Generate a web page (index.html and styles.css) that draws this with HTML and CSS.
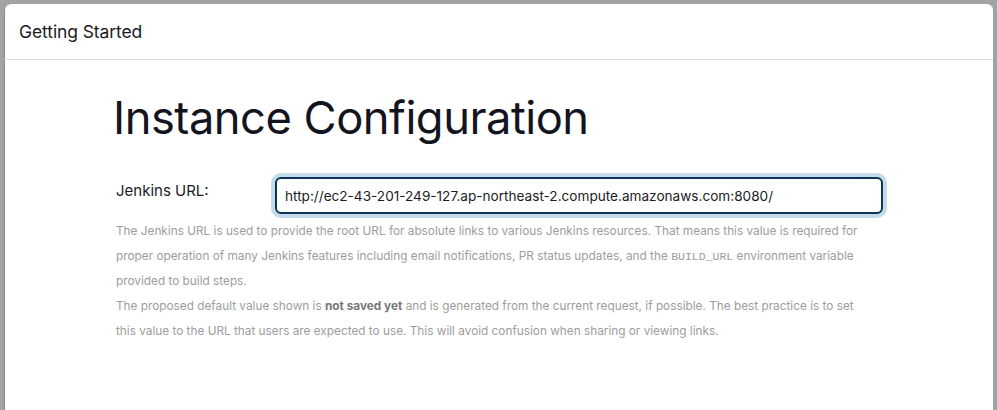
FILE: index.html
```html
<!DOCTYPE html>
<html lang="en">
<head>
<meta charset="utf-8">
<title>Getting Started</title>
<link rel="stylesheet" href="styles.css">
</head>
<body>
<div class="modal">
  <header class="modal-header">Getting Started</header>
  <main class="modal-body">
    <h1 class="title">Instance Configuration</h1>
    <div class="form-row">
      <label class="label" for="url">Jenkins URL:</label>
      <div class="input-wrap">
        <input id="url" class="input" type="text" value="http://ec2-43-201-249-127.ap-northeast-2.compute.amazonaws.com:8080/">
      </div>
    </div>
    <div class="help">
      <p>The Jenkins URL is used to provide the root URL for absolute links to various Jenkins resources. That means this value is required for proper operation of many Jenkins features including email notifications, PR status updates, and the <code>BUILD_URL</code> environment variable provided to build steps.</p>
      <p>The proposed default value shown is <strong>not saved yet</strong> and is generated from the current request, if possible. The best practice is to set this value to the URL that users are expected to use. This will avoid confusion when sharing or viewing links.</p>
    </div>
  </main>
</div>
</body>
</html>
```
FILE: styles.css
```css
html, body {
  margin: 0;
  padding: 0;
  height: 100%;
}
body {
  background: #a3a3a3;
  font-family: Inter, "Noto Sans", sans-serif;
  padding: 4px 4px 0 4px;
  box-sizing: border-box;
  overflow: hidden;
}
.modal {
  background: #fff;
  border-radius: 6px 6px 0 0;
  height: 420px;
  box-shadow: inset 1px 0 0 #888;
}
.modal-header {
  height: 56px;
  box-sizing: border-box;
  padding: 17px 15px 0 15px;
  font-size: 17.5px;
  color: #1b1b24;
  border-bottom: 1px solid #dcdcdc;
  letter-spacing: -0.1px;
}
.modal-body {
  padding: 30px 110px 0 109px;
}
.title {
  margin: 0;
  font-weight: 400;
  font-size: 45.3px;
  line-height: 56px;
  color: #14141f;
  letter-spacing: -0.5px;
}
.form-row {
  display: flex;
  align-items: flex-start;
  margin-top: 35px;
}
.label {
  width: 159px;
  padding-left: 3px;
  padding-top: 0;
  font-size: 15px;
  line-height: 20px;
  color: #1b1b24;
}
.input-wrap {
  flex: 1;
  margin-top: -4px;
}
.input {
  display: block;
  width: 100%;
  box-sizing: border-box;
  height: 37px;
  padding: 0 8px;
  border: 2px solid #0a3558;
  border-radius: 6px;
  box-shadow: 0 0 0 4px #c4dbea;
  font-family: Inter, "Noto Sans", sans-serif;
  font-size: 13.6px;
  color: #1b1b24;
  outline: none;
  background: #fff;
}
.help {
  margin-top: 5px;
  padding: 0 10px 0 3px;
  font-size: 11.8px;
  line-height: 25px;
  color: #9d9d9d;
}
.help p {
  margin: 0;
}
.help strong {
  color: #777;
  font-weight: 700;
}
.help code {
  font-family: "Liberation Mono", monospace;
  font-size: 11.5px;
  line-height: 1;
}
```
